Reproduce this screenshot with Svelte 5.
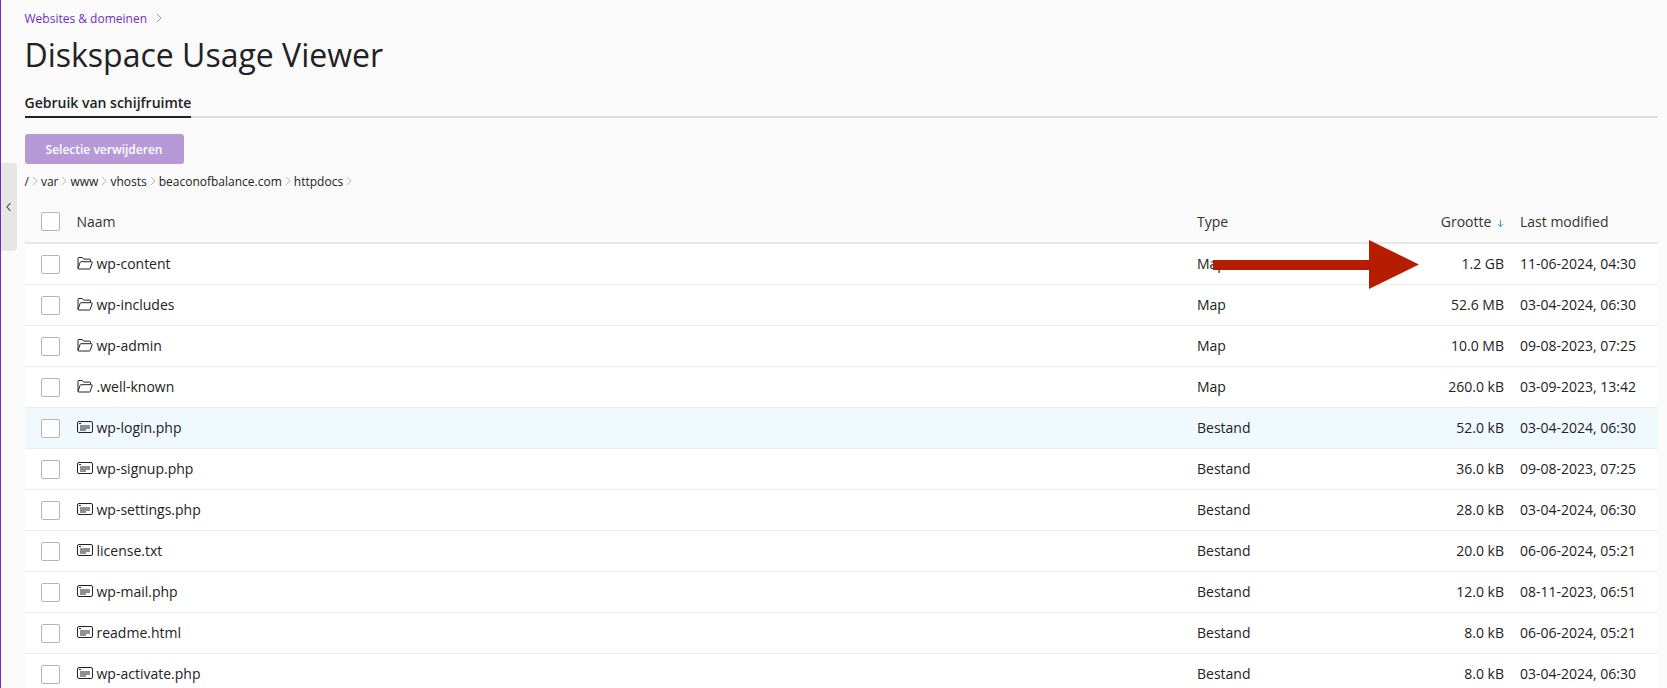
<script lang="ts">
  const rows = [
    { name: "wp-content", type: "Map", size: "1.2 GB", date: "11-06-2024, 04:30", dir: true },
    { name: "wp-includes", type: "Map", size: "52.6 MB", date: "03-04-2024, 06:30", dir: true },
    { name: "wp-admin", type: "Map", size: "10.0 MB", date: "09-08-2023, 07:25", dir: true },
    { name: ".well-known", type: "Map", size: "260.0 kB", date: "03-09-2023, 13:42", dir: true },
    { name: "wp-login.php", type: "Bestand", size: "52.0 kB", date: "03-04-2024, 06:30", hover: true },
    { name: "wp-signup.php", type: "Bestand", size: "36.0 kB", date: "09-08-2023, 07:25" },
    { name: "wp-settings.php", type: "Bestand", size: "28.0 kB", date: "03-04-2024, 06:30" },
    { name: "license.txt", type: "Bestand", size: "20.0 kB", date: "06-06-2024, 05:21" },
    { name: "wp-mail.php", type: "Bestand", size: "12.0 kB", date: "08-11-2023, 06:51" },
    { name: "readme.html", type: "Bestand", size: "8.0 kB", date: "06-06-2024, 05:21" },
    { name: "wp-activate.php", type: "Bestand", size: "8.0 kB", date: "03-04-2024, 06:30" },
  ];
  const crumbs = ["/", "var", "www", "vhosts", "beaconofbalance.com", "httpdocs"];
</script>

<div class="page">
  <button class="toggle" aria-label="Inklappen">
    <svg width="6" height="10" viewBox="0 0 6 10"><path d="M4.5 1 1 5l3.500 4" fill="none" stroke="#444" stroke-width="1.1" /></svg>
  </button>

  <main class="content">
    <div class="top-crumb">
      <a href="#top">Websites &amp; domeinen</a>
      <svg width="6" height="10" viewBox="0 0 6 10"><path d="M1 1l4 4-4 4" fill="none" stroke="#999" stroke-width="1" /></svg>
    </div>
    <h1>Diskspace Usage Viewer</h1>
    <div class="tabs"><span class="tab">Gebruik van schijfruimte</span></div>
    <button class="remove">Selectie verwijderen</button>
    <div class="path">
      {#each crumbs as c}
        <span>{c}</span>
        <svg width="6" height="10" viewBox="0 0 6 10"><path d="M1 1l4 4-4 4" fill="none" stroke="#bbb" stroke-width="1" /></svg>
      {/each}
    </div>

    <div class="table">
      <div class="row head">
        <div class="cell check"><span class="box"></span></div>
        <div class="cell name">Naam</div>
        <div class="cell type">Type</div>
        <div class="cell size">Grootte
          <svg class="sort" width="7" height="9" viewBox="0 0 7 9"><path d="M3.5 1v6.500M1 5.200l2.500 2.600L6 5.200" fill="none" stroke="#2f9fc4" stroke-width="1" /></svg>
        </div>
        <div class="cell date">Last modified</div>
      </div>
      {#each rows as r}
        <div class="row body" class:hover={r.hover}>
          <div class="cell check"><span class="box"></span></div>
          <div class="cell name">
            {#if r.dir}
              <svg class="icon" width="16" height="14" viewBox="0 0 16 14"><path d="M1 12.500V2.200q0-.7.7-.7h3.600l1.300 1.600h6.200q.7 0 .7.7v1.400M1 12.500q.1.500.7.500h10.800q.5 0 .7-.5l2-6q.2-.8-.6-.8H4q-.6 0-.8.5z" fill="none" stroke="#222" stroke-width="1" /></svg>
            {:else}
              <svg class="icon" width="16" height="14" viewBox="0 0 16 14"><rect x=".5" y="1.500" width="15" height="11" rx="1.500" fill="none" stroke="#222" /><path d="M2 3.500h2M3 6h10M3 8h10M3 10h6" stroke="#222" stroke-width="1" /></svg>
            {/if}
            <span>{r.name}</span>
          </div>
          <div class="cell type">{r.type}</div>
          <div class="cell size">{r.size}</div>
          <div class="cell date">{r.date}</div>
        </div>
      {/each}
    </div>
  </main>

  <svg class="arrow" width="210" height="50" viewBox="0 0 210 50">
    <path d="M1 20h156V0l50 24.500-50 24.500V30H1z" fill="#b51c00" />
  </svg>
</div>

<style>
  :global(body) {
    margin: 0;
    background: #fafafa;
    font-family: "Open Sans", sans-serif;
    color: #222;
    overflow: hidden;
  }

  .page {
    position: relative;
    height: 688px;
    overflow: hidden;
    border-left: 1.5px solid #6f2dbd;
    box-sizing: border-box;
  }

  .toggle {
    position: absolute;
    left: 0;
    top: 163px;
    width: 16px;
    height: 88px;
    padding: 0;
    border: 0;
    border-radius: 0 4px 4px 0;
    background: #e6e6e6;
    display: flex;
    align-items: center;
    justify-content: center;
  }

  .content {
    padding: 9px 9px 0 23.5px;
  }

  .top-crumb {
    display: flex;
    align-items: center;
    gap: 9px;
    height: 18px;
    font-size: 12px;
  }

  .top-crumb a {
    color: #6f2dbd;
    text-decoration: none;
  }

  h1 {
    margin: 7px 0 0;
    font-size: 32px;
    line-height: 42px;
    font-weight: 400;
    color: #222;
  }

  .tabs {
    margin-top: 15px;
    border-bottom: 2px solid #dedede;
    height: 25px;
  }

  .tab {
    display: inline-block;
    height: 25px;
    line-height: 24px;
    font-size: 14px;
    font-weight: 600;
    border-bottom: 2px solid #222;
  }

  .remove {
    display: block;
    margin-top: 16px;
    width: 159px;
    height: 30px;
    border: 0;
    border-radius: 3px;
    background: #b799d8;
    color: #fff;
    font: 600 12px "Open Sans", sans-serif;
  }

  .path {
    display: flex;
    align-items: center;
    gap: 3px;
    margin-top: 7px;
    height: 20px;
    font-size: 12px;
  }

  .table {
    margin-top: 9px;
  }

  .row {
    display: grid;
    grid-template-columns: 52px 1fr 208px 99px 154px;
    height: 41px;
    align-items: center;
    box-sizing: border-box;
    background: #fff;
    border-bottom: 1px solid #ececec;
    font-size: 14px;
  }

  .row.head {
    background: transparent;
    height: 44px;
    border-bottom: 2px solid #e8e8e8;
    color: #333;
  }

  .row.hover {
    background: #f0f9fd;
  }

  .cell {
    min-width: 0;
  }

  .row.body .cell:not(.check) {
    padding-bottom: 2px;
  }

  .check {
    padding-left: 16px;
    display: flex;
  }

  .box {
    width: 19px;
    height: 19px;
    box-sizing: border-box;
    background: #fff;
    border: 1px solid #b5b5b5;
    border-radius: 2px;
  }

  .name {
    display: flex;
    align-items: center;
    gap: 4px;
  }

  .size {
    text-align: right;
    white-space: nowrap;
  }

  .date {
    padding-left: 16px;
    white-space: nowrap;
  }

  .sort {
    margin-left: 2px;
    vertical-align: -1px;
  }

  .arrow {
    position: absolute;
    left: 1211px;
    top: 240px;
  }
</style>
